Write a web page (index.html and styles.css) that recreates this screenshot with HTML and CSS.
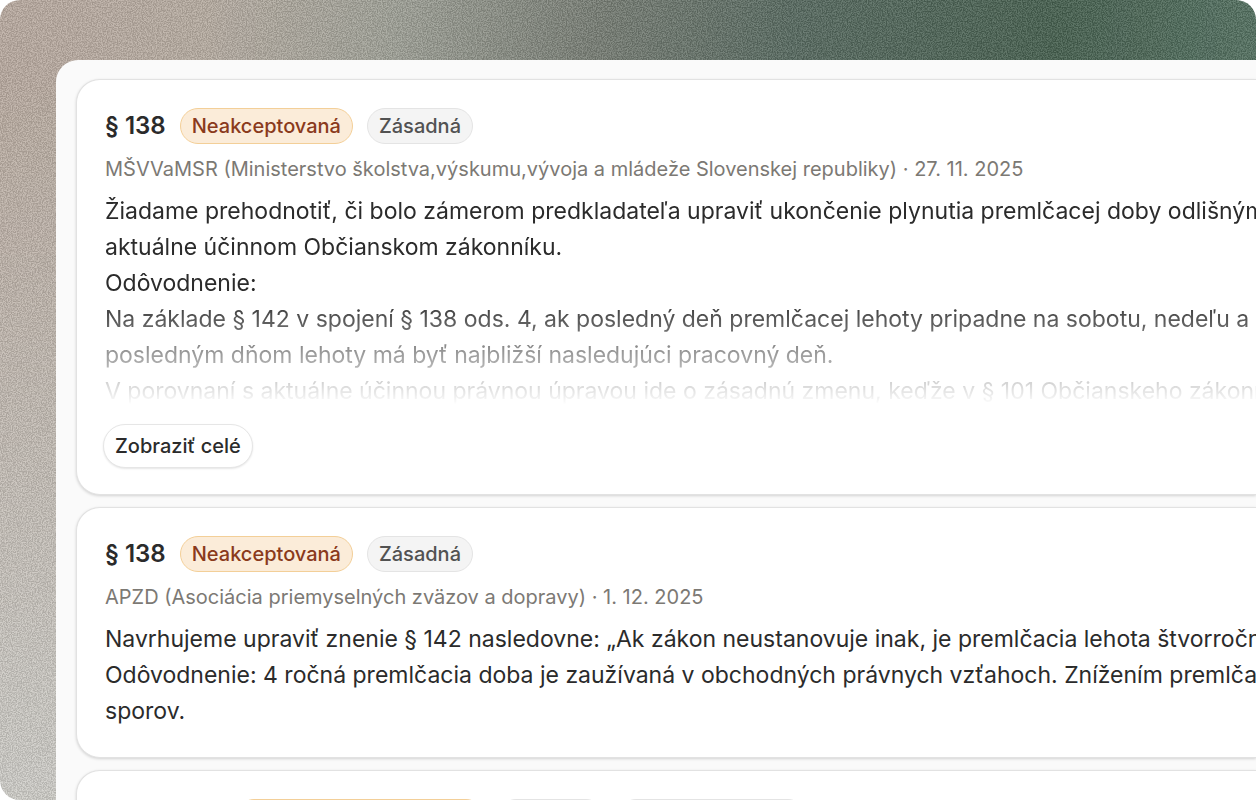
FILE: index.html
```html
<!DOCTYPE html>
<html lang="sk">
<head>
<meta charset="utf-8">
<title>Pripomienky</title>
<link rel="stylesheet" href="styles.css">
</head>
<body>
<div class="stage">
  <svg class="grain" aria-hidden="true">
    <filter id="noise" color-interpolation-filters="sRGB"><feTurbulence type="fractalNoise" baseFrequency="0.8" numOctaves="2" seed="4"/><feColorMatrix type="matrix" values="3 0 0 0 -1  3 0 0 0 -1  3 0 0 0 -1  0 0 0 0 1"/></filter>
    <rect width="100%" height="100%" filter="url(#noise)"/>
  </svg>
  <main class="panel">
    <article class="card">
      <header class="head">
        <h2 class="title">§ 138</h2>
        <span class="tag tag-warn">Neakceptovaná</span>
        <span class="tag">Zásadná</span>
      </header>
      <p class="meta">MŠVVaMSR (Ministerstvo školstva,výskumu,vývoja a mládeže Slovenskej republiky) · 27. 11. 2025</p>
      <div class="text text-faded">
        <p>Žiadame prehodnotiť, či bolo zámerom predkladateľa upraviť ukončenie plynutia premlčacej doby odlišným</p>
        <p>aktuálne účinnom Občianskom zákonníku.</p>
        <p>Odôvodnenie:</p>
        <p>Na základe § 142 v spojení § 138 ods. 4, ak posledný deň premlčacej lehoty pripadne na sobotu, nedeľu a</p>
        <p>posledným dňom lehoty má byť najbližší nasledujúci pracovný deň.</p>
        <p>V porovnaní s aktuálne účinnou právnou úpravou ide o zásadnú zmenu, keďže v § 101 Občianskeho zákonníka</p>
      </div>
      <button class="more" type="button">Zobraziť celé</button>
    </article>
    <article class="card">
      <header class="head">
        <h2 class="title">§ 138</h2>
        <span class="tag tag-warn">Neakceptovaná</span>
        <span class="tag">Zásadná</span>
      </header>
      <p class="meta">APZD (Asociácia priemyselných zväzov a dopravy) · 1. 12. 2025</p>
      <div class="text">
        <p>Navrhujeme upraviť znenie § 142 nasledovne: „Ak zákon neustanovuje inak, je premlčacia lehota štvorročná.“</p>
        <p>Odôvodnenie: 4 ročná premlčacia doba je zaužívaná v obchodných právnych vzťahoch. Znížením premlčacej</p>
        <p>sporov.</p>
      </div>
    </article>
    <article class="card">
      <header class="head">
        <h2 class="title">Čl. II § 138</h2>
        <span class="tag tag-warn">Čiastočne akceptovaná</span>
        <span class="tag">Zásadná</span>
        <span class="tag">Nová požiadavka</span>
      </header>
    </article>
  </main>
</div>
</body>
</html>
```
FILE: styles.css
```css
* { box-sizing: border-box; margin: 0; }

body {
  background: #fff;
  color: #2b2b2b;
  font-family: Inter, "Noto Sans", sans-serif;
}

.stage {
  position: relative;
  display: flex;
  height: 100vh;
  padding: 60px 0 0 56px;
  overflow: hidden;
  border-radius: 20px 20px 0 20px;
  background:
    linear-gradient(180deg, rgba(206, 206, 200, 0) 10%, #d0cfca 100%) left / 56px 100% no-repeat,
    linear-gradient(95deg, #bbaca1 0%, #b8aea3 16%, #a0a298 30%, #787e75 45%, #576a60 60%, #46604f 80%, #587767 100%);
}

.grain {
  position: absolute;
  inset: 0;
  width: 100%;
  height: 100%;
  opacity: 0.13;
}

.panel {
  position: relative;
  flex: 1;
  min-width: 0;
  height: max-content;
  padding: 19px 0 20px 20px;
  border-radius: 22px 0 0 0;
  background: #fafafa;
  display: flex;
  flex-direction: column;
  gap: 12px;
}

.card {
  padding: 28px 0 28px 28px;
  overflow: hidden;
  border: 1px solid #e2e2e2;
  border-right: 0;
  border-radius: 24px 0 0 24px;
  background: #fff;
  box-shadow: 0 1px 3px rgba(0, 0, 0, 0.16);
}

.head { display: flex; align-items: center; gap: 14px; }

.title { font-size: 24px; line-height: 36px; font-weight: 600; white-space: nowrap; }

.tag {
  padding: 0 11px;
  border: 1px solid #e4e4e4;
  border-radius: 18px;
  background: #f4f4f4;
  color: #525252;
  font-size: 20px;
  line-height: 34px;
  font-weight: 500;
  white-space: nowrap;
}

.tag-warn { border-color: #f3cf98; background: #fbecd9; color: #8a3a1c; }

.meta { margin-top: 9px; color: #7c7974; font-size: 20px; line-height: 32px; white-space: nowrap; }

.text { margin-top: 8px; font-size: 23px; line-height: 36px; white-space: nowrap; }

.text-faded {
  -webkit-mask-image: linear-gradient(#000 48%, transparent 98%);
  mask-image: linear-gradient(#000 48%, transparent 98%);
}

.more {
  margin: 15px 0 -2px -2px;
  padding: 0 11px;
  border: 1px solid #e6e6e6;
  border-radius: 22px;
  background: #fff;
  box-shadow: 0 1px 2px rgba(0, 0, 0, 0.1);
  color: #2b2b2b;
  font: 500 20px/42px Inter, "Noto Sans", sans-serif;
}
```
